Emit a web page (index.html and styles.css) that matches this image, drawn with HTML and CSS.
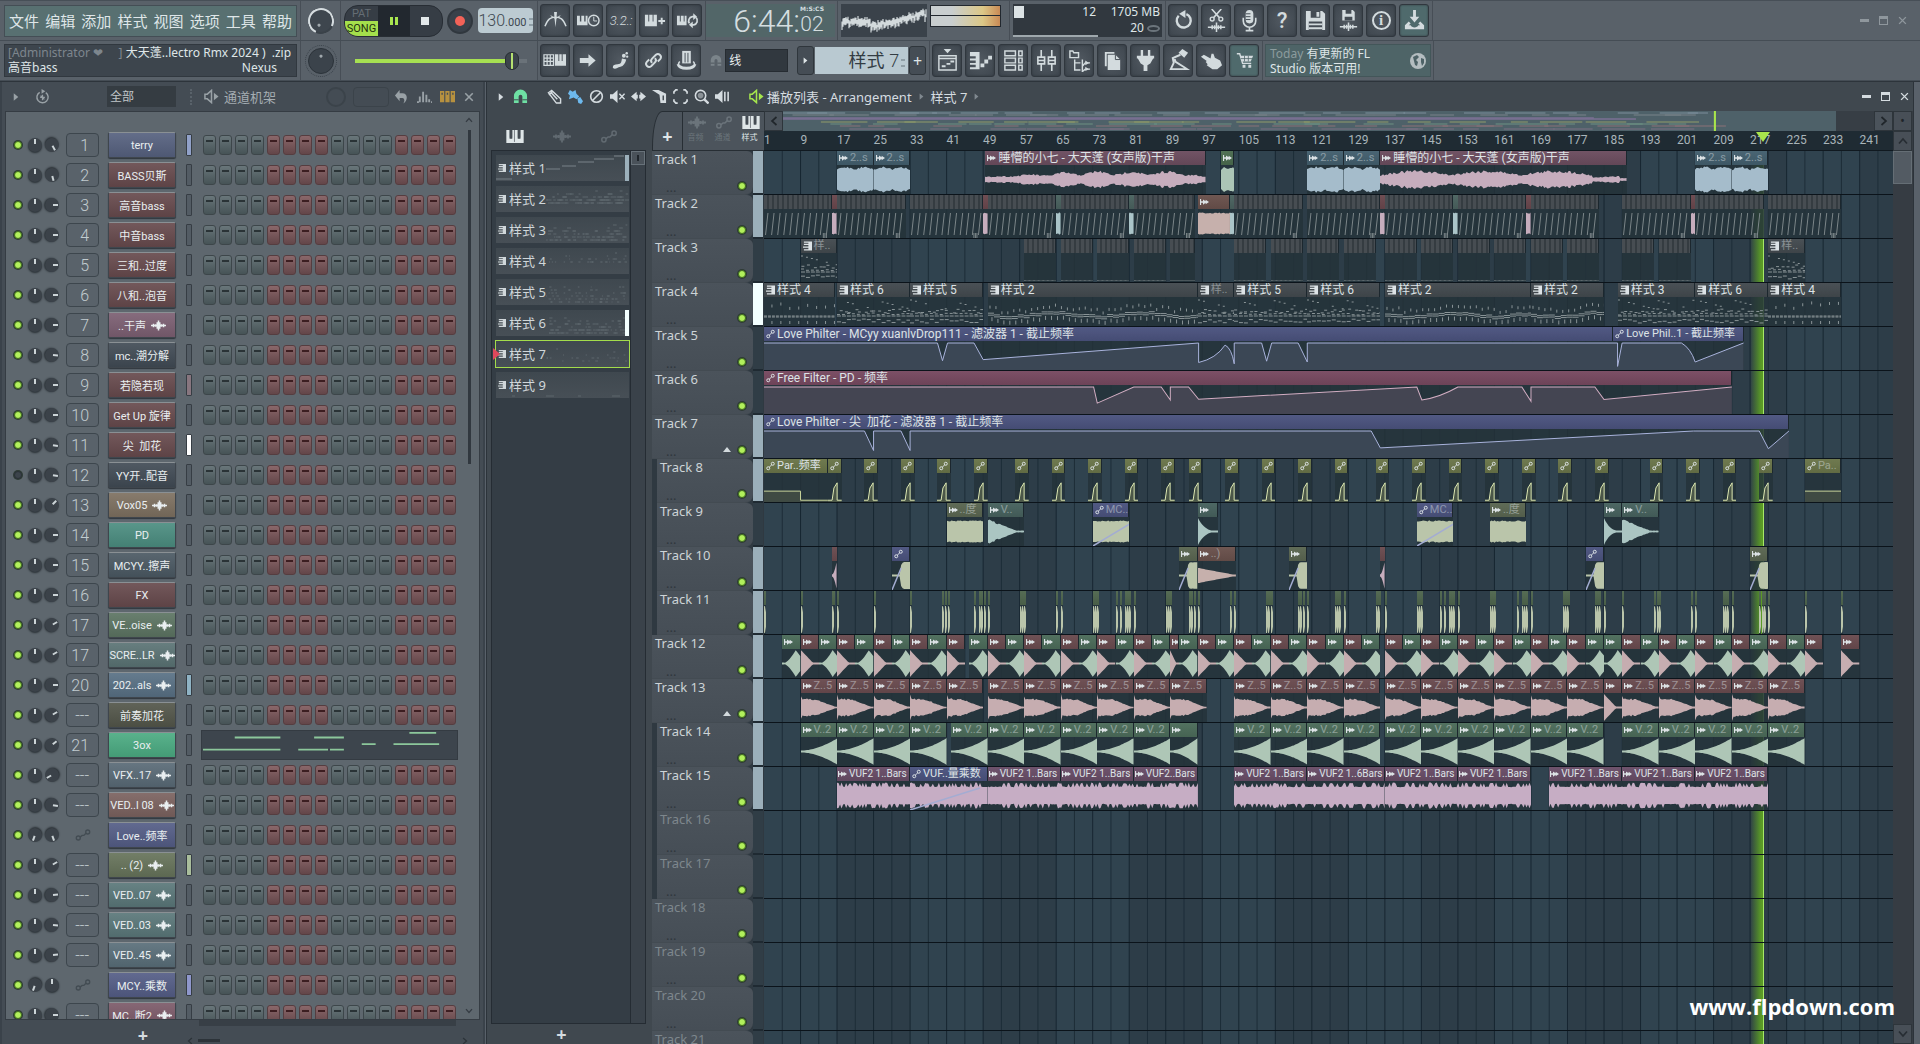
FILE: index.html
```html
<!DOCTYPE html>
<html lang="zh-CN">
<head>
  <meta charset="UTF-8" />
  <meta name="viewport" content="width=device-width, initial-scale=1.0" />
  <title>FL Studio</title>
  <link rel="stylesheet" href="styles.css">
</head>
<body>
  <svg class="sprite" aria-hidden="true">
    <symbol id="i-piano" viewBox="0 0 16 12"><path d="M0 0h3v8h2.500V0h5v8H13V0h3v12H0z" fill="currentColor"/><path d="M3.500 0h1.500v7h-1.500zM7.500 0v11M11 0h1.500v7H11z" fill="#444c54" stroke="#444c54" stroke-width=".6"/></symbol>
    <symbol id="i-wave" viewBox="0 0 18 12"><path d="M0 6h18M3 4v4M5.500 4.500v3M7.500 2v8M9 0v12M10.500 2v8M12.500 4.500v3M15 4v4" stroke="currentColor" stroke-width="1.800"/></symbol>
    <symbol id="i-auto" viewBox="0 0 18 14"><g fill="none" stroke="currentColor" stroke-width="1.600"><circle cx="3.500" cy="10.500" r="2.300"/><circle cx="14.500" cy="3.500" r="2.300"/><path d="M5.500 9.500 8 7.500h2L12.500 5"/></g></symbol>
    <symbol id="i-link2" viewBox="0 0 12 12"><g fill="none" stroke="currentColor" stroke-width="1.300"><circle cx="3" cy="9" r="2"/><circle cx="9" cy="3" r="2"/><path d="M4.500 7.500l3-3"/></g></symbol>
    <symbol id="i-clip" viewBox="0 0 12 10"><path d="M0 1v8h1.500V6H4v2.500L7.500 6v2L12 5 7.500 2v2L4 1.500V4H1.500V1z" fill="currentColor"/></symbol>
    <symbol id="i-pat" viewBox="0 0 10 10"><path d="M1 0h9v10H1V8.500h5V7H0V5.500h6V4H1V2.500h5V1.500H1z" fill="currentColor"/></symbol>
    <symbol id="i-metro" viewBox="0 0 24 24"><path d="M1 18C4 10 7 8.500 12 8.500S20 10 23 18" fill="none" stroke="currentColor" stroke-width="1.500"/><path d="M10.500 3h3l-.5 7L12 19l-1-9z" fill="currentColor"/><path d="M7 7l5 3 5-3" stroke="currentColor" fill="none"/></symbol>
    <symbol id="i-wait" viewBox="0 0 24 24"><path d="M0 7h3v6h1.500V7h3v6H9V7h2v10H0z" fill="currentColor"/><circle cx="17.500" cy="12" r="5.500" fill="none" stroke="currentColor" stroke-width="1.500"/><path d="M17.500 8v4.500H21" fill="none" stroke="currentColor"/></symbol>
    <symbol id="i-pianoplus" viewBox="0 0 24 24"><path d="M2 6h3.500v7h1V6H10v7h1V6h3.500v12H2z" fill="currentColor"/><path d="M19.500 9v7M16 12.500h7" stroke="currentColor" stroke-width="2"/></symbol>
    <symbol id="i-pianoloop" viewBox="0 0 24 24"><path d="M1 7h3v6h1V7h3v6h1V7h2v10H1z" fill="currentColor"/><path d="M14 15a4.500 4.500 0 0 1 3-7h2M21 9a4.500 4.500 0 0 1-2.500 7.500H16" fill="none" stroke="currentColor" stroke-width="1.800"/><path d="M18 4.500v7l4-3.500zM17.500 13v7l-4-3.500z" fill="currentColor"/></symbol>
    <symbol id="i-kbd" viewBox="0 0 24 24"><path d="M1 6h10v11H1zM1 9.500h10M1 13h10M4.300 6v11M7.600 6v11" fill="none" stroke="currentColor" stroke-width="1.300"/><path d="M12.500 5.500H16v7h1v-7h2.500v7h1v-7H24v12H12.500z" fill="currentColor"/></symbol>
    <symbol id="i-arrow" viewBox="0 0 24 24"><path d="M4 9.500h9V5.500L20.500 12 13 18.500v-4H4z" fill="currentColor"/></symbol>
    <symbol id="i-foot" viewBox="0 0 24 24"><path d="M4 19c0-2 2-3 5-3 4 0 4-3 4.500-6l4.500 1c-1 4-3 7-6 7.500-3 .5-4 2-6 2-1 0-2-.5-2-1.500z" fill="currentColor"/><circle cx="15.500" cy="7" r="2" fill="currentColor"/><circle cx="18.500" cy="4.500" r="1.300" fill="currentColor"/><circle cx="19" cy="8" r="1.200" fill="currentColor"/></symbol>
    <symbol id="i-link" viewBox="0 0 24 24"><g fill="none" stroke="currentColor" stroke-width="2"><path d="M10.500 14.500a3.200 3.200 0 0 1 0-4.500l4-4a3.200 3.200 0 0 1 4.500 4.500l-2.500 2.500"/><path d="M13.500 9.500a3.200 3.200 0 0 1 0 4.500l-4 4A3.200 3.200 0 0 1 5 13.500L7.500 11"/></g></symbol>
    <symbol id="i-hat" viewBox="0 0 24 24"><path d="M7.500 2h9v13h-9z" fill="currentColor"/><path d="M10.500 4v10M13.500 4v10" stroke="#444c54"/><path d="M5 13c-4 4 2 6.500 7 6.500s11-2.500 7-6.500M2.500 16c2 6.500 17 6.500 19 0" fill="none" stroke="currentColor" stroke-width="1.700"/></symbol>
    <symbol id="i-magnet" viewBox="0 0 16 16"><path d="M1 15V7.500a7 7 0 0 1 14 0V15h-5V8a2 2 0 0 0-4 0v7z" fill="currentColor"/><path d="M1 11.500h5M10 11.500h5" stroke="#40484f"/></symbol>
    <symbol id="i-undo" viewBox="0 0 24 24"><path d="M7 7a7.300 7.300 0 1 0 8-1.700" fill="none" stroke="currentColor" stroke-width="2.500"/><path d="M14 1v8.500L7.500 5z" fill="currentColor"/></symbol>
    <symbol id="i-cut" viewBox="0 0 24 24"><path d="M7 0l8 9M17 0 9 9M3 19h18M7.500 17v4M10 17v4M12 14v10M14 17v4M16.500 17v4" stroke="currentColor" stroke-width="1.600"/><circle cx="7.500" cy="10.500" r="2" fill="none" stroke="currentColor" stroke-width="1.500"/><circle cx="16.500" cy="10.500" r="2" fill="none" stroke="currentColor" stroke-width="1.500"/></symbol>
    <symbol id="i-mic" viewBox="0 0 24 24"><rect x="8" y="1" width="8" height="14" rx="4" fill="currentColor"/><path d="M8 5h5M8 8h5M8 11h5" stroke="#444c54"/><path d="M5.500 9v3.500a6.500 6.500 0 0 0 13 0V9M12 19v3M8 22.500h8" fill="none" stroke="currentColor" stroke-width="1.700"/></symbol>
    <symbol id="i-save" viewBox="0 0 24 24"><path d="M2 2h17l3 3v17H2z" fill="currentColor"/><path d="M7 2h10v7H7zM5 13h14v9H5z" fill="#444c54"/><path d="M13 3h3v5h-3zM5 15h14v2H5zM5 19h14v2H5z" fill="currentColor"/></symbol>
    <symbol id="i-savewave" viewBox="0 0 24 24"><path d="M5.500 1h11l2 2v9h-13z" fill="currentColor"/><path d="M9 1h6v4H9zM8 8h8v4H8z" fill="#444c54"/><path d="M3 18.500h18M7.500 16.500v4M10 16.500v4M12 14v9M14 16.500v4M16.500 16.500v4" stroke="currentColor" stroke-width="1.600"/></symbol>
    <symbol id="i-down" viewBox="0 0 24 24"><path d="M10.500 1h3v7H17l-5 6-5-6h3.500z" fill="currentColor"/><path d="M6 13l-4 4v4h20v-4l-4-4-2 2 2 2h-2c-1 3-7 3-8 0H6l2-2z" fill="currentColor"/></symbol>
    <symbol id="i-playlist" viewBox="0 0 24 24"><path d="M8 0h8l-4 4.500z" fill="currentColor"/><path d="M3 7h18v15H3zM3 10h18" fill="none" stroke="currentColor" stroke-width="1.500"/><path d="M6 18h4M11 15.500h4M15 13h4" stroke="currentColor" stroke-width="2"/></symbol>
    <symbol id="i-roll" viewBox="0 0 24 24"><path d="M1 3h10v18H1v-2h6v-2.500H1v-2h6V12H1v-2h6V7.500H1z" fill="currentColor"/><path d="M12 15h4v4h-4zM16 11h4v4h-4zM20 7h4v4h-4z" fill="currentColor"/></symbol>
    <symbol id="i-rack" viewBox="0 0 24 24"><path d="M3 2h11v5H3zM3 9.500h11v5H3zM3 17h11v5H3zM17.500 2H21v5h-3.500zM17.500 9.500H21v5h-3.500zM17.500 17H21v5h-3.500z" fill="none" stroke="currentColor" stroke-width="1.500"/></symbol>
    <symbol id="i-mixer" viewBox="0 0 24 24"><path d="M6.500 1v7M6.500 16v7M17.500 1v7M17.500 16v7M3 8.500h7v7H3zM14 8.500h7v7h-7zM3 12h7M14 12h7" fill="none" stroke="currentColor" stroke-width="1.700"/></symbol>
    <symbol id="i-tree" viewBox="0 0 24 24"><path d="M2 2h3l1 2h5v5H2zM7 11v11h6M7 14.500h6M15 11v7l3-3.500h5M15 18.500v5l3-2.500h5" fill="none" stroke="currentColor" stroke-width="1.500"/><path d="M18 12l4 2.500-4 2.500zM18 18.500l4 2.500-4 2z" fill="currentColor"/></symbol>
    <symbol id="i-pages" viewBox="0 0 24 24"><path d="M4 3h10v2H6v13H4z" fill="currentColor"/><path d="M7 6h8l5 5v11H7z" fill="currentColor"/><path d="M15 6v5h5" fill="none" stroke="#444c54"/></symbol>
    <symbol id="i-plug" viewBox="0 0 24 24"><path d="M7 1h2.500v6h5V1H17v6h4v3h-1l-3 5-3 2v6h-4v-6l-3-2-3-5H3V7h4z" fill="currentColor"/></symbol>
    <symbol id="i-lamp" viewBox="0 0 24 24"><path d="M14 6 6 9.500l1 5L4 21h17l-3-2-9-5.500-1-3" fill="none" stroke="currentColor" stroke-width="2"/><path d="M12 4l4-4 6 4-4 5z" fill="currentColor"/></symbol>
    <symbol id="i-hand" viewBox="0 0 24 24"><path d="M1 8l3-2 7 4 1-5h2l1.500 4L21 12l2 5-5 4h-5l-6-4 1-1-2-2.500 1-1z" fill="currentColor"/></symbol>
    <symbol id="i-cart" viewBox="0 0 24 24"><path d="M4 5h3l3 10h9" fill="none" stroke="currentColor" stroke-width="1.500"/><path d="M7.500 7H21l-2.500 6H9.500zM10 16.500h3v3h-3zM16 16.500h3v3h-3z" fill="currentColor"/><path d="M8 10h12M12 7v6M16 7v6" stroke="#4d6266" stroke-width=".8"/></symbol>
    <symbol id="i-pencil" viewBox="0 0 16 16"><path d="M1.500 4 5 1.500l9.500 9V15H10zM4.500 4l6.500 7M2 6.500 5.500 3" fill="none" stroke="currentColor" stroke-width="1.500"/></symbol>
    <symbol id="i-brush" viewBox="0 0 16 16"><path d="M2 1l3 2 3-2 1 4 3 3-3 3-3-2-5 2 1-4-2-2z M10 10l3-1.500 3 4.500-2 3-3-1z" fill="currentColor"/></symbol>
    <symbol id="i-no" viewBox="0 0 16 16"><circle cx="8" cy="8" r="6.200" fill="none" stroke="currentColor" stroke-width="1.700"/><path d="M4 12l8-8" stroke="currentColor" stroke-width="1.700"/></symbol>
    <symbol id="i-mute" viewBox="0 0 16 16"><path d="M0 5.500h3L8 1v14l-5-4.500H0z" fill="currentColor"/><path d="M10 5l5.500 6M15.500 5 10 11" stroke="currentColor" stroke-width="1.500"/></symbol>
    <symbol id="i-slip" viewBox="0 0 16 16"><path d="M0 8l6-5v3h4V3l6 5-6 5v-3H6v3z" fill="currentColor"/><path d="M8 4v8" stroke="#40484f" stroke-width="1.500"/></symbol>
    <symbol id="i-slice" viewBox="0 0 16 16"><path d="M0 1h7l8 4v10h-6L8 6z" fill="currentColor"/><path d="M12 7v5" stroke="#40484f" stroke-width="1.500"/></symbol>
    <symbol id="i-sel" viewBox="0 0 16 16"><path d="M1 5V3l2-2h2M11 1h2l2 2v2M15 11v2l-2 2h-2M5 15H3l-2-2v-2" fill="none" stroke="currentColor" stroke-width="1.800"/></symbol>
    <symbol id="i-zoom" viewBox="0 0 16 16"><circle cx="7" cy="7" r="5.500" fill="none" stroke="currentColor" stroke-width="1.700"/><circle cx="7" cy="7" r="3" fill="currentColor" opacity=".5"/><path d="M11 11l4.500 4.500" stroke="currentColor" stroke-width="2.500"/></symbol>
    <symbol id="i-spk" viewBox="0 0 16 16"><path d="M0 5.500h3L8 1v14l-5-4.500H0z" fill="currentColor"/><path d="M10.500 3v10M14 3v10" stroke="currentColor" stroke-width="1.700"/></symbol>
    <symbol id="i-play" viewBox="0 0 16 16"><path d="M1 5.500h2.500L8 1.500v13L3.500 10.500H1z" fill="none" stroke="currentColor" stroke-width="1.600"/><path d="M10.500 4v8l5-4z" fill="currentColor"/></symbol>
    <symbol id="i-tri" viewBox="0 0 8 12"><path d="M1 1v10l6-5z" fill="currentColor"/></symbol>
    <symbol id="i-gear" viewBox="0 0 16 16"><path d="M5 3.500a6 6 0 1 0 6.500.3" fill="none" stroke="currentColor" stroke-width="1.500"/><path d="M8 6v6M5.500 9h5M6 7l4 4" stroke="currentColor" stroke-width="1.300"/><path d="M7 0v5l4-2.500z" fill="currentColor"/></symbol>
    <symbol id="i-back" viewBox="0 0 16 16"><path d="M6 1v3.500h3c6 0 6 8 1 11 2-4 1-6-2-6H6V13L1 7z" fill="currentColor"/></symbol>
    <symbol id="i-bars" viewBox="0 0 16 16"><path d="M0 14h2M3 14V8M6.500 14V3M10 14V6M13 14v-3M15 14h1" stroke="currentColor" stroke-width="2"/></symbol>
    <symbol id="i-cols" viewBox="0 0 16 12"><path d="M0 0h4.500v12H0zM5.700 0h4.500v12H5.700zM11.400 0H16v12h-4.600z" fill="currentColor"/><path d="M1.500 3h1.500M7.200 3h1.500M13 3h1.500" stroke="#454d54" stroke-width="2"/></symbol>
    <symbol id="i-x" viewBox="0 0 16 16"><path d="M2 2l12 12M14 2 2 14" stroke="currentColor" stroke-width="2.500"/></symbol>
    <symbol id="i-globe" viewBox="0 0 16 16"><circle cx="8" cy="8" r="8" fill="currentColor"/><path d="M3 4l4-2 2 2-3 3 2 2-1 4-2-1-1-4zM11 5l3 1v4l-2 3-1-4z" fill="#4d6266"/></symbol>
    <symbol id="i-chev" viewBox="0 0 10 8"><path d="M1 6.500 5 2l4 4.500" fill="none" stroke="currentColor" stroke-width="1.700"/></symbol>
  </svg>

  <div class="app">
    <header class="toolbar">
      <div class="bar">
        <div class="group menu-group">
          <nav class="menu">
            <button>文件</button><button>编辑</button><button>添加</button><button>样式</button><button>视图</button><button>选项</button><button>工具</button><button>帮助</button>
          </nav>
        </div>
        <div class="group knob-group"><button class="main-knob lit" aria-label="Main volume"></button></div>
        <div class="group transport">
          <div class="pill">
            <button class="mode"><span class="pat">PAT</span><span class="song">SONG</span></button>
            <button class="pause" aria-label="Pause"><i></i><i></i></button>
            <button class="stop" aria-label="Stop"><i></i></button>
          </div>
          <button class="rec" aria-label="Record"><i></i></button>
          <button class="tempo">130<small>.000</small><em class="spin"></em></button>
        </div>
        <div class="group tools">
          <button class="tool" data-icon="metro" aria-label="Metronome"></button>
          <button class="tool" data-icon="wait" aria-label="Wait for input"></button>
          <button class="tool count">3.2.:</button>
          <button class="tool" data-icon="pianoplus" aria-label="Overdub"></button>
          <button class="tool" data-icon="pianoloop" aria-label="Loop record"></button>
        </div>
        <div class="group time"><div class="clock"><span>6:44:</span><span class="cs"><small>M:S:CS</small><span>02</span></span></div></div>
        <div class="group scope-group">
          <svg class="scope" id="scope" viewBox="0 0 86 33" preserveAspectRatio="none"></svg>
          <div class="meter"><i></i><i></i></div>
        </div>
        <div class="group perf-group">
          <div class="perf">
            <div class="cpu"><i></i><span>12</span></div>
            <div class="mem"><span>1705 MB</span><span>20 <em></em></span></div>
          </div>
        </div>
        <div class="group tools">
          <button class="tool" data-icon="undo" aria-label="Undo"></button>
          <button class="tool" data-icon="cut" aria-label="Edit sample"></button>
          <button class="tool" data-icon="mic" aria-label="Record audio"></button>
          <button class="tool glyph">?</button>
          <button class="tool" data-icon="save" aria-label="Save"></button>
          <button class="tool" data-icon="savewave" aria-label="Render"></button>
          <button class="tool"><b class="info">i</b></button>
          <button class="tool teal" data-icon="down" aria-label="Download"></button>
        </div>
        <div class="win-buttons"><button class="min" aria-label="Minimize"></button><button class="max" aria-label="Maximize"></button><button aria-label="Close" data-icon="x"></button></div>
      </div>

      <div class="bar">
        <div class="group menu-group">
          <div class="hint">
            <p><span class="dim">[Administrator ❤ &nbsp; &nbsp; ]</span> 大天蓬..lectro Rmx 2024 ) &nbsp;.zip</p>
            <p class="second"><span>高音bass</span><span>Nexus</span></p>
          </div>
        </div>
        <div class="group knob-group"><button class="main-knob" aria-label="Main pitch"></button></div>
        <div class="group shift"><input type="range" class="song-pos" value="95" aria-label="Song position"></div>
        <div class="group tools wide">
          <button class="tool" data-icon="kbd" aria-label="Typing keyboard"></button>
          <button class="tool" data-icon="arrow" aria-label="Step edit"></button>
          <button class="tool" data-icon="foot" aria-label="Scroll"></button>
          <button class="tool" data-icon="link" aria-label="Link"></button>
          <button class="tool" data-icon="hat" aria-label="Touch"></button>
          <span class="snap-icon" data-icon="magnet"></span>
          <select class="drop snap" aria-label="Snap"><option>线</option></select>
          <button class="step-btn" data-icon="tri" aria-label="Menu"></button>
          <button class="pattern-name">样式 <span>7</span><em class="spin"></em></button>
          <button class="step-btn">+</button>
        </div>
        <div class="group tools">
          <button class="tool" data-icon="playlist" aria-label="Playlist"></button>
          <button class="tool" data-icon="roll" aria-label="Piano roll"></button>
          <button class="tool" data-icon="rack" aria-label="Channel rack"></button>
          <button class="tool" data-icon="mixer" aria-label="Mixer"></button>
          <button class="tool" data-icon="tree" aria-label="Browser"></button>
          <button class="tool" data-icon="pages" aria-label="Copy"></button>
          <button class="tool" data-icon="plug" aria-label="Plugins"></button>
          <button class="tool" data-icon="lamp" aria-label="Tempo tapper"></button>
          <button class="tool" data-icon="hand" aria-label="Touch controller"></button>
          <button class="tool teal" data-icon="cart" aria-label="Shop"></button>
        </div>
        <div class="group news-group">
          <div class="news"><p><span>Today</span> 有更新的 FL<br>Studio 版本可用!</p><i data-icon="globe"></i></div>
        </div>
      </div>
    </header>

    <main class="desk">
      <section class="rack">
        <div class="title-bar">
          <i class="t-arrow" data-icon="tri"></i>
          <i class="t-gear" data-icon="gear"></i>
          <select class="drop filter" aria-label="Channel filter"><option>全部</option></select>
          <i class="dots"></i>
          <i class="t-spk" data-icon="play"></i>
          <h2>通道机架</h2>
          <i class="swing"></i>
          <i class="swing-box"></i>
          <button class="mini" data-icon="back" aria-label="Undo"></button>
          <button class="mini" data-icon="bars" aria-label="Graph editor"></button>
          <button class="mini gold" data-icon="cols" aria-label="Steps"></button>
          <button class="mini small" data-icon="x" aria-label="Close"></button>
        </div>
        <div class="rack-body">
          <div class="channels" id="channels"></div>
          <div class="rack-scroll"><i data-icon="chev"></i><b></b><i class="flip" data-icon="chev"></i></div>
        </div>
        <div class="rack-foot">
          <button class="add">+</button>
          <div class="h-scroll"><i data-icon="chev"></i><b></b><i data-icon="chev"></i></div>
        </div>
      </section>

      <section class="playlist">
        <div class="title-bar">
          <i class="t-arrow" data-icon="tri"></i>
          <button class="mini green" data-icon="magnet" aria-label="Snap"></button>
          <div class="pl-tools" id="plTools"></div>
          <i class="t-spk lime" data-icon="play"></i>
          <h2>播放列表 - Arrangement <i data-icon="tri"></i> 样式 7 <i data-icon="tri"></i></h2>
          <div class="win-buttons"><button class="min" aria-label="Minimize"></button><button class="max" aria-label="Maximize"></button><button aria-label="Close" data-icon="x"></button></div>
        </div>
        <div class="pl-body">
          <aside class="picker">
            <div class="picker-tabs"><i data-icon="piano"></i><i class="off" data-icon="wave"></i><i class="off" data-icon="auto"></i></div>
            <div class="picker-box">
              <div class="patterns" id="patterns"></div>
              <div class="picker-scroll"><b></b></div>
            </div>
            <button class="add">+</button>
          </aside>
          <div class="arrange">
            <div class="arrange-head">
              <div class="corner">
                <button class="corner-add">+</button>
                <div class="corner-tabs">
                  <span class="off"><i data-icon="wave"></i>音频</span>
                  <span class="off"><i data-icon="auto"></i>通道</span>
                  <span><i data-icon="piano"></i>样式</span>
                </div>
              </div>
              <div class="head-right">
                <div class="overview">
                  <button class="ov-btn left" data-icon="chev" aria-label="Scroll left"></button>
                  <svg class="mini-map" id="miniMap" viewBox="0 0 1000 20" preserveAspectRatio="none"></svg>
                  <button class="ov-btn right" data-icon="chev" aria-label="Scroll right"></button>
                </div>
                <div class="ruler" id="ruler"></div>
              </div>
            </div>
            <div class="tracks" id="tracks">
              <svg class="grid-lines" id="gridLines" preserveAspectRatio="none"></svg>
            </div>
          </div>
          <div class="v-scroll"><button class="dot" aria-label="Zoom">•</button><button data-icon="chev" aria-label="Up"></button><b></b><button class="flip last" data-icon="chev" aria-label="Down"></button></div>
        </div>
        <div class="watermark">www.flpdown.com</div>
      </section>
    </main>
  </div>
  <script src="script.js"></script>
</body>
</html>
```
FILE: styles.css
```css
* {
  box-sizing: border-box;
}
body {
  margin: 0;
  background: #59616a;
  color: #dfe6e8;
  font-family: "Noto Sans", "Noto Sans CJK SC", sans-serif;
  font-size: 12px;
  overflow: hidden;
}
button,
input,
select {
  font: inherit;
  color: inherit;
  border: 0;
  padding: 0;
  margin: 0;
  background: none;
}
h2,
p {
  margin: 0;
  font-weight: normal;
  white-space: nowrap;
}
i,
em {
  font-style: normal;
}
svg {
  display: block;
}
.sprite {
  position: absolute;
  width: 0;
  height: 0;
}
.app {
  display: flex;
  flex-direction: column;
  height: 100vh;
}

/* toolbar */
.toolbar {
  flex: none;
  background: #596169;
  border-top: 1px solid #474f57;
  border-bottom: 1px solid #2d343b;
}
.bar {
  display: flex;
  height: 40px;
  border-bottom: 1px solid #454d55;
}
.group {
  display: flex;
  align-items: center;
  border-right: 1px solid #474e56;
}
.menu-group {
  width: 301px;
  padding: 0 3px 0 4px;
}
.menu {
  display: flex;
  flex: 1;
  justify-content: space-between;
  align-items: center;
  height: 32px;
  padding: 0 4px;
  background: #587071;
  border: 1px solid #444e55;
  font-size: 15px;
}
.hint {
  flex: 1;
  height: 33px;
  padding: 0 3px;
  background: #3d454d;
  border: 1px solid #31383f;
  line-height: 15px;
}
.hint .dim {
  color: #7d868d;
}
.second {
  display: flex;
  justify-content: space-between;
  padding-right: 16px;
}
.knob-group {
  width: 40px;
  justify-content: center;
}
.main-knob {
  width: 26px;
  height: 26px;
  border-radius: 50%;
  border: 1px solid #2b3239;
  background: radial-gradient(circle at 50% 30%, #a0a8ad 0 1px, transparent 2px), #3b434b;
  outline: 1px dotted #3b434b;
  outline-offset: 2px;
}
.main-knob.lit {
  background: radial-gradient(circle at 65% 65%, #a0a8ad 0 1px, transparent 2px), #3e464e;
  border: 2px solid #d5dcdf;
  border-right-color: #3a4249;
  outline: none;
  transform: rotate(70deg);
}
.transport {
  width: 197px;
  padding-left: 3px;
  gap: 4px;
}
.pill {
  display: flex;
  width: 99px;
  height: 32px;
  border-radius: 14px;
  overflow: hidden;
  background: #363d45;
  border: 1px solid #272d34;
}
.mode {
  display: flex;
  flex-direction: column;
  width: 33px;
  font: 11px/15px Roboto, sans-serif;
}
.pat {
  color: #656d74;
  width: 100%;
}
.song {
  width: 100%;
  background: #a4e04c;
  color: #23310f;
}
.pause {
  display: flex;
  justify-content: center;
  align-items: center;
  gap: 2px;
  width: 32px;
  background: #22282f;
}
.pause i {
  width: 3px;
  height: 8px;
  background: #a9e650;
}
.stop {
  flex: 1;
}
.stop i {
  display: block;
  width: 8px;
  height: 8px;
  margin-left: 11px;
  background: #e2e8ea;
}
.rec {
  width: 26px;
  height: 26px;
  border-radius: 50%;
  background: #39414a;
  border: 2px solid #30373e;
}
.rec i {
  display: block;
  width: 10px;
  height: 10px;
  margin: 0 auto;
  border-radius: 50%;
  background: #f26258;
}
.tempo {
  width: 55px;
  height: 25px;
  margin-left: 1px;
  border-radius: 4px;
  background: #bccbd2;
  color: #3c474f;
  font: 300 16px/25px Roboto, sans-serif;
  white-space: nowrap;
}
.tempo small {
  font-size: 11px;
  font-weight: 400;
}
.tools {
  gap: 3px;
  padding: 0 3px 0 2px;
}
.tool {
  display: flex;
  align-items: center;
  justify-content: center;
  width: 30px;
  height: 33px;
  border-radius: 3px;
  border: 1px solid #30373e;
  background: radial-gradient(#515961, #3d454d);
  color: #d3dbde;
  box-shadow: inset 0 0 2px #2f363c;
}
.tool svg {
  width: 23px;
  height: 23px;
}
.tool.teal {
  background: #4f6a6c;
}
.count {
  font: italic 300 13px Roboto, sans-serif;
}
.glyph {
  font: 500 22px Roboto, sans-serif;
}
.info {
  width: 19px;
  height: 19px;
  border: 2px solid #d3dbde;
  border-radius: 50%;
  font: bold 15px/15px "Liberation Serif", serif;
}
.time {
  width: 132px;
}
.clock {
  display: flex;
  width: 129px;
  height: 33px;
  padding-right: 11px;
  justify-content: flex-end;
  background: #526668;
  font: 300 32px/34px Roboto, sans-serif;
  color: #d5dee0;
}
.cs {
  display: flex;
  flex-direction: column;
  align-items: center;
  width: 24px;
  font-size: 21px;
  line-height: 21px;
}
.cs small {
  font: bold 6px/10px "DejaVu Sans", sans-serif;
}
.scope-group {
  width: 172px;
  padding-left: 3px;
  gap: 3px;
}
.scope {
  width: 86px;
  height: 33px;
  background: #3a424a;
}
.meter {
  display: flex;
  flex-direction: column;
  gap: 1px;
  width: 71px;
  height: 22px;
  margin-bottom: 10px;
  background: #22282f;
  padding: 1px;
}
.meter i {
  flex: 1;
  background: linear-gradient(90deg, #c9cecf 30%, #dcc887 75%, #c98a55);
}
.perf-group {
  width: 156px;
  padding-left: 3px;
}
.perf {
  display: flex;
  width: 149px;
  height: 33px;
  background: #31383f;
  line-height: 16px;
}
.cpu {
  display: flex;
  justify-content: space-between;
  width: 85px;
  padding-right: 2px;
  border-bottom: 2px solid #9fa8ad;
}
.cpu i {
  width: 10px;
  height: 12px;
  margin: 2px 0 0 1px;
  background: #dbe2e4;
}
.mem {
  display: flex;
  flex-direction: column;
  flex: 1;
  align-items: flex-end;
  padding-right: 2px;
  white-space: nowrap;
}
.mem em {
  display: inline-block;
  width: 13px;
  height: 7px;
  border: 2px solid #6c757c;
  border-radius: 50%;
}
.win-buttons {
  display: flex;
  align-items: center;
  gap: 10px;
  margin-left: auto;
  padding-right: 13px;
}
.win-buttons button {
  width: 9px;
  height: 9px;
}
.win-buttons .min {
  height: 3px;
  background: currentColor;
}
.win-buttons .max {
  border: 1px solid;
  border-top-width: 3px;
}
.win-buttons button svg {
  width: 9px;
  height: 9px;
}
.toolbar .win-buttons {
  color: #8f979d;
}
.shift {
  width: 197px;
  padding-left: 14px;
}
.song-pos {
  appearance: none;
  width: 172px;
  height: 20px;
}
.song-pos::-webkit-slider-runnable-track {
  height: 4px;
  background: linear-gradient(90deg, #a6e052 90%, #6a7279 90%);
}
.song-pos::-webkit-slider-thumb {
  appearance: none;
  width: 14px;
  height: 18px;
  margin-top: -7px;
  border-radius: 7px 7px 8px 8px;
  border: 1px solid #262c32;
  background: linear-gradient(90deg, #3c444b 5px, #b5e070 5px 7px, #3c444b 7px);
}
.wide {
  width: 392px;
}
.snap-icon svg {
  width: 12px;
  height: 13px;
  margin-left: 6px;
  color: #7b848a;
}
.drop {
  appearance: none;
  background: #31383f;
  border: 1px solid #262c32;
  color: #e8edef;
  padding-left: 3px;
}
.drop option {
  background: #31383f;
}
.snap {
  width: 63px;
  height: 23px;
}
.step-btn {
  width: 17px;
  height: 29px;
  border-radius: 3px;
  border: 1px solid #2f363c;
  background: #454d55;
  font-size: 16px;
}
.step-btn svg {
  width: 5px;
  height: 9px;
  margin: 0 auto;
}
.step-btn[data-icon] {
  margin-left: 6px;
}
.pattern-name {
  width: 94px;
  height: 27px;
  margin: 0 -2px;
  padding-right: 3px;
  background: #b9c9d1;
  color: #333c43;
  font-size: 18px;
  line-height: 25px;
  text-align: right;
  white-space: nowrap;
}
.pattern-name span {
  font-family: Roboto, sans-serif;
  font-weight: 300;
}
.spin {
  display: inline-block;
  width: 4px;
  height: 8px;
  margin-left: 2px;
  border: solid #8f9ea6;
  border-width: 2px 0;
}
.news-group {
  padding: 0 2px;
  width: 171px;
}
.news {
  display: flex;
  align-items: center;
  justify-content: space-between;
  width: 166px;
  height: 33px;
  padding: 0 4px;
  background: #4e6467;
  border: 1px solid #435659;
  line-height: 15px;
}
.news span {
  color: #8c9c9e;
}
.news svg {
  width: 16px;
  height: 16px;
  color: #b4bdc0;
}

/* windows */
.desk {
  display: flex;
  flex: 1;
  min-height: 0;
}
.title-bar {
  display: flex;
  align-items: center;
  height: 29px;
  flex: none;
}
.title-bar h2 {
  font-size: 13px;
}
.title-bar svg {
  width: 15px;
  height: 15px;
}
.title-bar .t-arrow svg {
  width: 6px;
  height: 12px;
}

/* channel rack */
.rack {
  display: flex;
  flex-direction: column;
  width: 485px;
  flex: none;
  background: #444c54;
  border: solid #3a424a;
  border-width: 0 2px;
}
.rack .title-bar {
  padding: 0 5px 0 11px;
  color: #99a1a6;
}
.t-gear {
  margin-left: 16px;
}
.rack .filter {
  width: 69px;
  height: 21px;
  margin-left: 57px;
  background: #353c42;
  border: 0;
  color: #c0c6c9;
}
.dots {
  width: 2px;
  height: 16px;
  margin: 0 12px 0 14px;
  border-left: 2px dotted #59626a;
}
.rack h2 {
  margin-left: 5px;
  color: #a5adb2;
}
.swing {
  width: 20px;
  height: 20px;
  margin-left: auto;
  border: 2px solid #3b434a;
  border-radius: 50%;
}
.swing-box {
  width: 36px;
  height: 20px;
  margin: 0 1px 0 7px;
  border: 1px solid #3b434a;
  border-radius: 4px;
}
.mini {
  display: flex;
  justify-content: center;
  width: 23px;
}
.mini.gold {
  color: #b7913f;
}
.mini.small svg {
  width: 10px;
  height: 10px;
}
.mini.small {
  width: 19px;
}
.rack-body {
  display: flex;
  flex: 1;
  min-height: 0;
  margin: 0 3px 0 3px;
  overflow: hidden;
  background: #5e676e;
  border: 1px solid #353c43;
}
.channels {
  flex: 1;
  padding-top: 18px;
}
.channel {
  display: flex;
  align-items: center;
  height: 30px;
  padding-left: 8px;
}
.led {
  width: 8px;
  height: 8px;
  flex: none;
  border-radius: 50%;
  background: #b2f05c;
  border: 1px solid #3e6b1c;
  box-shadow: 0 0 0 1px #2e3b35;
}
.led.off {
  background: #3c444b;
  border-color: #2a3137;
}
.knob {
  width: 14px;
  height: 14px;
  flex: none;
  border-radius: 50%;
  background: #3b4249;
  box-shadow: 0 1px 2px #262c31;
}
.knob::after {
  content: "";
  display: block;
  width: 2px;
  height: 5px;
  margin: 1px 6px;
  background: #ccd4d7;
}
.led + .knob {
  margin-left: 6px;
}
.knob + .knob {
  margin-left: 3px;
  transform: rotate(var(--turn));
}
.knob.low {
  transform: rotate(200deg);
}
.mix {
  display: block;
  width: 33px;
  height: 24px;
  flex: none;
  margin: 0 9px 0 7px;
  padding-right: 9px;
  border: 1px solid #3d464d;
  border-radius: 4px;
  background: #59626a;
  color: #c2ccd0;
  text-align: right;
  font: 300 16px Roboto, sans-serif;
}
.mix.auto {
  border: 0;
  background: none;
  padding: 6px 9px;
  color: #434c53;
}
.mix.auto svg {
  width: 16px;
  height: 12px;
}
.name {
  display: flex;
  align-items: center;
  justify-content: center;
  gap: 5px;
  width: 68px;
  height: 26px;
  flex: none;
  margin-right: 10px;
  border-radius: 2px;
  border: 1px solid #3f464d;
  border-top-color: #8a9094;
  background: linear-gradient(#ffffff14, #00000018), var(--tone);
  box-shadow: 0 1px 1px #30373d;
  color: #e9eef0;
  font: 11px Roboto, "Noto Sans CJK SC", sans-serif;
  white-space: pre;
}
.name svg {
  width: 15px;
  height: 11px;
}
.pick {
  width: 6px;
  height: 22px;
  flex: none;
  margin-right: 11px;
  border: 1px solid #363d44;
  border-radius: 1px;
  background: var(--lit, #535c64);
}
.steps {
  display: flex;
  gap: 3px;
}
.steps input {
  appearance: none;
  width: 13px;
  height: 20px;
  border: 1px solid #3d464a;
  border-radius: 3px;
  background: linear-gradient(#2a3336, #2a3336) 50% 4px / 7px 2px no-repeat, linear-gradient(#66727500, #465356), #69767a;
}
.steps input.red {
  border-color: #553d40;
  background: linear-gradient(#3c1e21, #3c1e21) 50% 4px / 7px 2px no-repeat, linear-gradient(#81606200, #634649), #8a676a;
}
.roll {
  width: 257px;
  height: 30px;
  margin-left: -2px;
  background: #3d454d;
  border: 1px solid #343b42;
}
.rack-scroll {
  display: flex;
  flex-direction: column;
  align-items: center;
  width: 20px;
  padding: 5px 0;
  color: #353c43;
}
.rack-scroll svg {
  width: 8px;
  height: 6px;
}
.rack-scroll b {
  width: 3px;
  height: 334px;
  margin: 7px 0 auto;
  background: #31383f;
}
.flip svg {
  transform: rotate(180deg);
}
.rack-foot {
  display: flex;
  height: 24px;
  flex: none;
}
.add {
  font-size: 18px;
  line-height: 18px;
  font-weight: bold;
  color: #d5dce0;
}
.rack-foot .add {
  width: 24px;
  margin-left: 129px;
  padding-top: 6px;
}
.h-scroll {
  display: flex;
  align-items: flex-end;
  width: 283px;
  margin-left: 31px;
  color: #2c3339;
  background: linear-gradient(#383f46, #383f46) 13px 0 / 257px 6px no-repeat;
}
.h-scroll b {
  width: 22px;
  height: 3px;
  margin: 0 auto 2px 4px;
  background: #2c3339;
}
.h-scroll svg {
  width: 8px;
  height: 6px;
  transform: rotate(-90deg);
}
.h-scroll b + i svg {
  transform: rotate(90deg);
}

/* playlist */
.playlist {
  display: flex;
  flex-direction: column;
  flex: 1;
  min-width: 0;
  margin: 0 6px 0 1px;
  position: relative;
  background: #40484f;
  border: solid #2c333a;
  border-width: 0 1px;
}
.playlist .title-bar {
  padding-left: 11px;
  color: #d5dce0;
}
.playlist .t-arrow {
  margin-right: 5px;
}
.green {
  color: #6ee0a4;
}
.pl-tools {
  display: flex;
  gap: 6px;
  margin: 0 22px 0 15px;
}
.pl-tools button:nth-child(2) {
  color: #6db9ee;
}
.lime {
  color: #a5e64d;
}
.playlist h2 {
  display: flex;
  align-items: center;
  gap: 7px;
  margin-left: 3px;
}
.playlist .t-spk {
  margin-left: -3px;
}
.playlist h2 svg {
  width: 5px;
  height: 9px;
  color: #808990;
}
.playlist .win-buttons {
  padding-right: 4px;
}
.pl-body {
  display: flex;
  flex: 1;
  min-height: 0;
}
.picker {
  display: flex;
  flex-direction: column;
  width: 155px;
  flex: none;
  margin: 0 6px 0 4px;
}
.picker-tabs {
  display: flex;
  justify-content: space-between;
  align-items: center;
  height: 39px;
  padding: 12px 28px 0 15px;
}
.picker-tabs svg {
  width: 18px;
  height: 13px;
}
.off {
  color: #616a71;
}
.picker-box {
  display: flex;
  flex: 1;
  background: #343d45;
  border: 1px solid #252c33;
}
.patterns {
  flex: 1;
  padding: 4px 1px 0 4px;
}
.pattern {
  position: relative;
  display: flex;
  align-items: center;
  gap: 3px;
  width: 100%;
  height: 26px;
  margin-bottom: 5px;
  padding-left: 2px;
  background: linear-gradient(#3f484f, #474f56);
  font-size: 13px;
  line-height: 20px;
  color: #d0d7da;
}
.pattern .pic {
  position: absolute;
  inset: 0;
  width: 100%;
  height: 100%;
}
.pattern > svg {
  width: 8px;
  height: 10px;
}
.pattern.current {
  outline: 1px solid #a3dc4b;
}
.pattern.current::before {
  content: "";
  position: absolute;
  left: -3px;
  border: 6px solid transparent;
  border-left: 7px solid #e0485c;
  z-index: 1;
}
.pattern .edge {
  position: absolute;
  right: 0;
  width: 4px;
  height: 26px;
  background: var(--edge);
}
.picker-scroll {
  width: 15px;
  background: #3a424a;
  border-left: 1px solid #252c33;
}
.picker-scroll b {
  display: block;
  width: 14px;
  height: 14px;
  border: 1px solid #68727a;
  background: linear-gradient(#20262c, #20262c) center / 2px 6px no-repeat, #4a525a;
}
.picker .add {
  height: 20px;
  padding-right: 14px;
}
.arrange {
  flex: 1;
  display: flex;
  flex-direction: column;
  min-width: 0;
}
.arrange-head {
  display: flex;
  height: 40px;
  flex: none;
}
.corner {
  display: flex;
  width: 112px;
  flex: none;
  border-bottom: 1px solid #272e34;
}
.corner-add {
  width: 31px;
  padding-top: 10px;
  background: #4c545c;
  border: 1px solid #272e34;
  border-bottom: 0;
  border-top-left-radius: 10px 36px;
  font-size: 18px;
  font-weight: bold;
}
.corner-tabs {
  display: flex;
  flex: 1;
  justify-content: space-around;
  background: #4c545c;
  border-top: 1px solid #272e34;
  font-size: 8px;
}
.corner-tabs svg {
  width: 18px;
  height: 13px;
  margin: 4px 0 2px;
}
.corner-tabs .off {
  color: #6b747b;
}
.head-right {
  flex: 1;
  background: #202c34;
}
.overview {
  display: flex;
  height: 20px;
  background: #373e45;
}
.ov-btn {
  width: 19px;
  background: #4b535b;
  border: 1px solid #2e353b;
}
.ov-btn svg {
  width: 10px;
  height: 8px;
  margin: 0 auto;
  color: #20262b;
  transform: rotate(-90deg);
}
.ov-btn.right svg {
  transform: rotate(90deg);
}
.mini-map {
  flex: 1;
  min-width: 0;
  height: 20px;
  margin-right: 38px;
  background: #4e6169;
}
.ruler {
  position: relative;
  display: flex;
  height: 20px;
  overflow: hidden;
  background: #1f2b33;
  border-bottom: 1px solid #101920;
  font: 12px/19px Roboto, sans-serif;
  color: #a9b5ba;
}
.ruler span {
  flex: none;
}
.marker {
  position: absolute;
  top: 1px;
  margin-left: -7px;
  border: 7px solid transparent;
  border-top: 10px solid #a8e44c;
}
.tracks {
  position: relative;
  flex: 1;
  overflow: hidden;
  background: #2f3941;
}
.grid-lines {
  position: absolute;
  top: 0;
  left: 112px;
  width: calc(100% - 112px);
  height: 100%;
}
.track {
  display: flex;
  height: 44px;
}
.track-head {
  position: relative;
  display: flex;
  justify-content: space-between;
  width: 101px;
  flex: none;
  padding: 0 7px 0 3px;
  border-radius: 0 6px 8px 0;
  border-bottom: 1px solid #434b52;
  background: linear-gradient(#4b535b, #464e56);
  font-size: 13px;
  line-height: 17px;
  color: #cdd4d7;
}
.track-head::after {
  content: "...";
  position: absolute;
  left: 14px;
  bottom: -2px;
  color: #30373d;
}
.track.sub .track-head {
  margin-left: 5px;
  width: 96px;
}
.track.sub .track-head::after {
  left: 9px;
}
.track.empty .track-head {
  color: #7e878d;
}
.track-head .led {
  margin-top: 31px;
}
.fold {
  margin: 32px 7px 0 auto;
  width: 0;
  height: 0;
  border: 4px solid transparent;
  border-top: 0;
  border-bottom: 5px solid #d3dadd;
}
.strip {
  width: 10px;
  flex: none;
  margin-right: 1px;
  border-bottom: 2px solid #1f2a32;
  background: var(--strip, #303d46);
}
.lane {
  position: relative;
  flex: 1;
  border-bottom: 1px solid #0b131a;
}
.clip {
  position: absolute;
  top: 0;
  bottom: 0;
  overflow: hidden;
  background: #25323ad9;
}
.clip-head {
  display: flex;
  align-items: center;
  gap: 2px;
  height: 14px;
  padding-left: 2px;
  overflow: hidden;
  background: linear-gradient(#ffffff08, #00000018), var(--c);
  border-right: 1px solid #1c272e;
  font: 11px/14px Roboto, "Noto Sans CJK SC", sans-serif;
  white-space: pre;
  color: #dde3e6;
}
.clip.long .clip-head {
  font-size: 12px;
}
.clip.tight .clip-head {
  font-size: 10px;
  padding-left: 1px;
}
.clip.sliver .clip-head {
  padding: 0;
  border: 0;
}
.clip-head.faded span {
  opacity: .45;
}
.clip-head svg {
  width: 9px;
  height: 10px;
  flex: none;
}
.clip-body {
  width: 100%;
  height: 29px;
}
.ticks .clip-head {
  background: repeating-linear-gradient(90deg, #474d52 0 3px, #353c41 3px 5px);
}
.playhead {
  position: absolute;
  top: 0;
  bottom: 0;
  width: 14px;
  margin-left: -13px;
  background: linear-gradient(90deg, #4f8a2800, #5a9a26 85%);
  border-right: 1px solid #a8e868;
}
.v-scroll {
  display: flex;
  flex-direction: column;
  width: 20px;
  flex: none;
  background: #363c43;
}
.v-scroll button {
  width: 19px;
  height: 20px;
  background: #484f57;
  border: 1px solid #2e353b;
  line-height: 14px;
}
.v-scroll .dot {
  color: #1f252a;
}
.v-scroll svg {
  width: 10px;
  height: 8px;
  margin: 0 auto;
  color: #272d33;
}
.v-scroll b {
  width: 19px;
  height: 33px;
  background: #535b63;
  border: 1px solid #656e75;
}
.v-scroll .last {
  margin: auto 0 0;
}
.watermark {
  position: absolute;
  right: 18px;
  bottom: 24px;
  font: bold 22px/28px "Open Sans", sans-serif;
  color: #fff;
}
```
FILE: script.js
```js
const BARS = 247.3;
const pct = n => (n / BARS * 100) + '%';
const use = name => `<svg><use href="#i-${name}"/></svg>`;

document.querySelectorAll('[data-icon]').forEach(el => {
  el.innerHTML = use(el.dataset.icon);
});

// small fixed-seed generator so the waveforms stay the same on reload
let seed = 7;
function rnd() {
  seed = (seed * 16807) % 2147483647;
  return seed / 2147483647;
}

/* ---- channel rack ---- */
const RED = '#674a4d', SLATE = '#414b55', BLUE = '#545d86', TEAL = '#5a7779';
const channels = [
  ['1', 'terry', '#56617f', 150, '#91a1c8'],
  ['2', 'BASS贝斯', RED, 165],
  ['3', '高音bass', RED, 90],
  ['4', '中音bass', RED, 90],
  ['5', '三和..过度', RED, 90],
  ['6', '八和..泡音', RED, 90],
  ['7', '..干声', '#7c5f72', 90, '', 1],
  ['8', 'mc..潮分解', SLATE, 95],
  ['9', '若隐若现', RED, 90, '#88767f'],
  ['10', 'Get Up 旋律', RED, 90],
  ['11', '尖  加花', RED, 100, '#ffffff'],
  ['12', 'YY开..配音', SLATE, 100],
  ['13', 'Vox05', '#7d7060', 45, '', 1],
  ['14', 'PD', '#4b8d80', 90],
  ['15', 'MCYY..擦声', '#4b5963', 90],
  ['16', 'FX', RED, 90],
  ['17', 'VE..oise', '#5c7462', 60, '', 1],
  ['17', 'SCRE..LR', '#5a7374', 60, '', 1],
  ['20', '202..als', '#587084', 90, '#8fb3c4', 1],
  ['---', '前奏加花', '#53564a', 60],
  ['21', '3ox', '#4bab82', 50],
  ['---', 'VFX..17', '#596a76', 240, '', 1],
  ['---', 'VED..l 08', '#7b625f', 100, '', 1],
  ['auto', 'Love..频率', BLUE, 160],
  ['---', '.. (2)', '#66735a', 60, '#a9bd9b', 1],
  ['---', 'VED..07', TEAL, 85, '', 1],
  ['---', 'VED..03', TEAL, 95, '', 1],
  ['---', 'VED..45', '#596e79', 85, '', 1],
  ['auto', 'MCY..乘数', BLUE, 0, '#8f97cc'],
  ['---', 'MC..断2', '#7c5a69', 90, '', 1]
];
const steps = Array.from({ length: 16 }, (_, i) =>
  `<input type="checkbox" aria-label="Step ${i + 1}"${i % 8 > 3 ? ' class="red"' : ''}>`).join('');
const roll = `<svg class="roll" viewBox="0 0 257 30" preserveAspectRatio="none"><path stroke="#8cc79b" stroke-width="2"
  d="M1 20h78M33 7h46M97 20h30M129 20h14M113 7h30M161 14h14M193 14h46M209 2h27"/></svg>`;

document.getElementById('channels').innerHTML = channels.map(([mix, name, tone, turn, lit, wave]) => `
  <div class="channel" style="--turn:${turn}deg;--tone:${tone};${lit ? '--lit:' + lit : ''}">
    <button class="led${mix === '12' ? ' off' : ''}" aria-label="Mute ${name}"></button>
    <i class="knob${mix === 'auto' ? ' low' : ''}"></i><i class="knob"></i>
    ${mix === 'auto' ? `<span class="mix auto">${use('auto')}</span>` : `<input class="mix" value="${mix}" aria-label="Mixer track ${name}">`}
    <button class="name">${name}${wave ? use('wave') : ''}</button>
    <i class="pick"></i>
    ${name === '3ox' ? roll : `<div class="steps">${steps}</div>`}
  </div>`).join('');

/* ---- playlist tools and picker ---- */
document.getElementById('plTools').innerHTML =
  ['pencil', 'brush', 'no', 'mute', 'slip', 'slice', 'sel', 'zoom', 'spk']
    .map(n => `<button aria-label="${n}">${use(n)}</button>`).join('');

function notes(w, h, n, len) {
  let d = '';
  for (let i = 0; i < n; i++) {
    const y = Math.round(h * (.2 + .7 * Math.sqrt(rnd())) / 3) * 3;
    d += `M${(rnd() * w).toFixed(1)} ${y}h${(len * (.4 + rnd())).toFixed(1)}`;
  }
  return d;
}
const pics = {
  1: 'M0 24h16M50 14h14M66 11h14M82 7h16M98 4h20M118 1h10',
  2: notes(80, 18, 90, 4), 3: notes(80, 24, 90, 3), 4: notes(80, 14, 36, 2),
  5: notes(80, 24, 80, 2), 6: notes(80, 24, 90, 3), 7: notes(80, 20, 24, 2), 9: 'M16 24h3M50 24h8M82 24h3M116 24h8'
};
document.getElementById('patterns').innerHTML = [1, 2, 3, 4, 5, 6, 7, 9].map(n => `
  <button class="pattern${n === 7 ? ' current' : ''}">
    <svg class="pic" viewBox="0 0 133 26"><path d="${pics[n]}" ${n > 1 && n < 9 ? 'transform="translate(50 2)"' : ''} stroke="#5d666d" stroke-width="${n === 1 ? 2 : 1}"/></svg>
    ${use('pat')}样式 ${n}
    ${n === 1 || n === 6 ? `<i class="edge" style="--edge:${n === 1 ? '#9cb0bb' : '#f3ffff'}"></i>` : ''}
  </button>`).join('');

/* ---- waveforms ---- */
const shapes = {
  full: x => .8 + .18 * Math.abs(Math.sin(x * 6.300)),
  vocal: x => .18 + .5 * Math.min(1, x * 2.200) * (.7 + .3 * Math.sin(x * 40)) * (x > .9 ? (1 - x) * 8 : 1),
  vocal2: x => (.35 + .35 * Math.abs(Math.sin(x * 11))) * (x > .86 ? (x > .97 ? .1 : .35) : 1),
  decay: x => x < .02 ? 1 : x < .45 ? .7 - x * .2 : Math.max(.03, .6 * (1 - (x - .45) / .5)),
  rise: x => .03 + .97 * Math.pow(x, 1.800),
  up: x => x < .15 ? .04 : x < .75 ? Math.pow((x - .1) / .65, 1.600) : 1 - (x - .75) * 1.800,
  down: x => x < .68 ? Math.max(.03, 1 - x * 1.500) : .03,
  hit: x => Math.max(.03, Math.pow(1 - x, 3)),
  fall: x => Math.max(.03, .55 * (1 - x)),
  swell: x => x < .45 ? .03 : x < .6 ? .7 + (x - .45) * 2 : 1,
  tail: x => x < .05 ? 1 : Math.max(.03, .95 * (1 - x * 1.250)),
  stab: x => x < .5 ? 1 : 1.500 - x,
  dense: () => .66 + (rnd() > .6 ? .3 : 0),
  slab: () => .82
};
const noise = { full: .16, vocal: .35, vocal2: .35, dense: .1, slab: .12, decay: .2, tail: .2 };

function wave(kind, len, color, ramp = '') {
  const n = Math.max(6, Math.round(len * 3)), top = [], bot = [];
  for (let i = 0; i <= n; i++) {
    const a = 13 * shapes[kind](i / n) * (1 - (noise[kind] || .03) * rnd());
    top.push(`${i},${(14 - a).toFixed(1)}`);
    bot.unshift(`${i},${(15 + a).toFixed(1)}`);
  }
  const line = ramp ? `<path d="M0 29L${n * ramp} 7" stroke="#a3acd2" stroke-width="1.500" vector-effect="non-scaling-stroke"/>` : '';
  return `<svg class="clip-body" viewBox="0 0 ${n} 29" preserveAspectRatio="none"><polygon fill="${color}" points="${top.join(' ')} ${bot.join(' ')}"/>${line}</svg>`;
}

function curve(pts, len, line, fill) {
  const d = pts.map(([x, y, c], i) => {
    const py = 2 + y * 26;
    if (c) return `Q${c[0]} ${2 + c[1] * 26} ${x} ${py}`;
    return `${i ? 'L' : 'M'}${x} ${py}`;
  }).join('');
  return `<svg class="clip-body" viewBox="0 0 ${len} 29" preserveAspectRatio="none">
    <path d="${d}V29H0z" fill="${fill}"/><path d="${d}" fill="none" stroke="${line}" stroke-width="1" vector-effect="non-scaling-stroke"/></svg>`;
}

function pattern(len, kind) {
  const w = len * 4.600;
  let d = '';
  if (kind === '4') {
    for (let x = 0; x < w; x += 4) d += `M${x} 19h3M${x} 20h3`;
    for (let x = 8; x < w; x += 9) d += `M${x} ${4 + rnd() * 6}v3M${x} 24v3`;
  } else if (kind === '2') {
    for (let x = 0; x < w; x += 6) {
      const y = 16 + 2 * Math.sin(x / 14) + rnd() * 2;
      d += `M${x} ${y}h6M${x} ${y + 2}h6M${x + 2} ${y - 5 - rnd() * 4}v3M${x + 4} ${y + 4}v4`;
    }
  } else {
    for (let x = 0; x < w; x += 5) {
      d += `M${x} 19h4M${x + rnd() * 4} ${12 + rnd() * 4}h3M${x} ${22 + rnd() * 4}h4M${x} ${16 + rnd() * 2}h3`;
      if (rnd() > .4) d += `M${x} ${3 + (x % 37) / 4}h2`;
    }
  }
  return `<svg class="clip-body" viewBox="0 0 ${w} 29" preserveAspectRatio="none"><path d="${d}" fill="none" stroke="#8b9598" stroke-width="1"/></svg>`;
}

function clip(start, len, { color = '#444b50', icon = '', text = '', faded = false, body = '', cls = '' }) {
  return `<div class="clip ${cls}" style="left:${pct(start)};width:${pct(len)}">
    <div class="clip-head${faded ? ' faded' : ''}" style="--c:${color}">${icon ? use(icon) : ''}${text ? `<span>${text}</span>` : ''}</div>${body}</div>`;
}
function sizeClass(l) {
  if (l > 20) return 'long';
  if (l > 12) return 'tight';
  return l < 1.500 ? 'sliver' : '';
}
const audio = (s, l, kind, color, tint, text = '', faded = true, ramp = '') =>
  clip(s, l, { color, icon: l > 1.500 ? 'clip' : '', text, faded, cls: sizeClass(l), body: wave(kind, l, tint, ramp) });
const pat = (s, l, n) =>
  clip(s, l, { icon: 'pat', text: l < 9 ? '样..' : '样式 ' + n, faded: l < 9, cls: l < 9 ? '' : 'long', body: pattern(l, n) });

// runs of tiny pattern clips drawn as one block
function slashes(s, e) {
  const w = (e - s) * 3;
  let d = '';
  for (let x = 1; x < w - 2; x += 4) d += `M${x} 26L${x + 1.600} 4`;
  d += `M${w - 6} 24v5M${w - 5} 24v5M${w - 4} 24v5`;
  return clip(s, e - s, { cls: 'ticks', body: `<svg class="clip-body" viewBox="0 0 ${w} 29" preserveAspectRatio="none"><path d="${d}" stroke="#7b8588" vector-effect="non-scaling-stroke"/></svg>` });
}
function dotsRun(s, e) {
  return clip(s, e - s, { cls: 'ticks', body: `<svg class="clip-body" viewBox="0 0 40 29" preserveAspectRatio="none"><path d="M0 27.500h40" stroke="#717b7e" stroke-dasharray="1 .6"/></svg>` });
}

const PINK = '#6d4e60', PINKW = '#c6adbd', ICE = '#44606f', ICEW = '#a5bccb';
const GREEN = '#4d6d5b', GREENW = '#aec6b6', ROSE = '#6b4c50', ROSEW = '#c6adb0';
const SEA = '#48635f', SEAW = '#abc5c2', OLIVE = '#6b764a', KHAKI = '#5b6752', KHAKIW = '#bac5aa';
const BROWN = '#6b524d', NAVY = '#4c5480', WINE = '#784a61';

const lanes = {};
lanes[1] = [16, 24, 119, 127, 204, 212].map(b => audio(b, 8, 'full', ICE, ICEW, '2..s')).join('')
  + audio(48.5, 48.3, 'vocal', PINK, PINKW, '睡懵的小七 - 大天蓬 (女声版)干声', false)
  + audio(100, 3, 'full', '#4c6d50', '#abc5b6')
  + audio(135, 54, 'vocal2', PINK, PINKW, '睡懵的小七 - 大天蓬 (女声版)干声', false);

lanes[2] = [[0, 15], [16, 31], [32, 48], [49, 64], [65, 80], [81, 94.5], [103, 118], [119, 135], [136, 151],
  [152, 167], [168, 183], [188, 203], [204, 219], [220, 236]].map(r => slashes(...r)).join('')
  + [15, 48, 135, 167, 203].map(b => audio(b, 1, 'slab', '#6b484e', PINKW)).join('')
  + [64, 80, 102, 151].map(b => audio(b, 1, 'slab', '#4b6360', '#abc5c9')).join('')
  + audio(95, 7, 'slab', BROWN, '#c6b0ac');

lanes[3] = pat(8, 8, '5') + pat(220, 8, '5')
  + [[57, 64], [65, 72], [73, 80], [81, 88], [89, 94.5], [103, 110], [111, 118], [119, 126], [127, 134], [136, 143],
    [144, 151], [152, 159], [160, 167], [168, 175], [176, 183], [188, 195], [196, 203]].map(r => dotsRun(...r)).join('');

lanes[4] = [[0, 15.6, '4'], [16, 16, '6'], [32, 16, '5'], [49, 46, '2'], [95, 8, '5'], [103, 16, '5'], [119, 16, '6'],
  [136, 32, '2'], [168, 16, '2'], [187, 17, '3'], [204, 16, '6'], [220, 16, '4']].map(p => pat(...p)).join('');

const LINE = '#a9b3dc', FILL = '#3b4755';
lanes[5] = clip(0, 186, {
  color: NAVY, icon: 'link2', cls: 'long', text: 'Love Philter - MCyy xuanlvDrop111 - 滤波器 1 - 截止频率',
  body: curve([[0, 0], [38, 0], [39.1, .68], [40.2, 0], [46, 0], [48, .64], [95.2, 0], [95.2, .75], [101, .08, [99, .6]], [103, .8, [102.4, .2]],
    [103, 0], [109, 0], [110.1, .7], [111.2, 0], [117, 0], [119, .73], [119, 0], [186, 0]], 186, LINE, FILL)
}) + clip(186, 28.6, {
  color: NAVY, icon: 'link2', text: 'Love Phil..1 - 截止频率',
  body: curve([[0, 0], [1, 0], [1, .9], [2, 0], [15, 0], [18, .73, [17, .2]], [28.6, 0]], 28.6, LINE, FILL)
});
lanes[6] = clip(0, 212, {
  color: WINE, icon: 'link2', cls: 'long', text: 'Free Filter - PD - 频率',
  body: curve([[0, 0], [72.2, 0], [73, .62], [81, 0], [87, 0], [89, .5], [89, 0], [93, 0], [95.2, .47], [143, 0], [144.1, .5], [152, 0, [148, .4]],
    [166, 0], [168, .55], [168, 0], [182, 0], [184, .48], [212, 0]], 212, '#d3aec3', '#444552')
});
lanes[7] = clip(0, 224.5, {
  color: NAVY, icon: 'link2', cls: 'long', text: 'Love Philter - 尖  加花 - 滤波器 1 - 截止频率',
  body: curve([[0, 0], [22, 0], [24, .75], [24, 0], [30, 0], [32, .75], [32, 0], [133, 0], [135, .65], [203.6, 0], [218, 0], [220, .68], [224.5, 0]],
    224.5, LINE, FILL)
});

lanes[8] = clip(0, 14, { color: OLIVE, icon: 'link2', text: 'Par..频率', body: curve([[0, .62], [8, .62], [8, .97], [14, .97]], 14, '#c9d49b', '#3f4a43') })
  + [14, 22, 30, 38, 46, 55, 63, 71, 79, 87, 93, 101, 109, 117, 125, 134, 142, 150, 158, 166, 174, 182, 194, 202, 210, 218]
    .map(b => clip(b, 3, { color: OLIVE, icon: 'link2', body: curve([[0, .97], [.9, .97], [1.3, .5], [2, .3], [2, .97], [3, .97]], 3, '#dde8b2', '#4b5748') })).join('')
  + clip(228, 8, { color: OLIVE, icon: 'link2', text: 'Pa..', faded: true, body: curve([[0, .62], [8, .62]], 8, '#c9d49b', '#3f4a43') });

const mc = s => clip(s, 8, { color: NAVY, icon: 'link2', text: 'MC..', faded: true, body: wave('slab', 8, KHAKIW, 1) });
lanes[9] = audio(40, 8, 'slab', KHAKI, KHAKIW, '..度') + audio(49, 8, 'tail', SEA, SEAW, 'V..') + mc(72)
  + audio(95, 4.5, 'hit', SEA, SEAW) + mc(143) + audio(159, 8, 'slab', KHAKI, KHAKIW, '..度')
  + audio(184, 4, 'hit', SEA, SEAW) + audio(188, 8, 'tail', SEA, SEAW, 'V..');

lanes[10] = [15, 135].map(b => audio(b, 1, 'rise', ROSE, PINKW)).join('')
  + [28, 180].map(b => clip(b, 4, { color: NAVY, icon: 'link2', body: wave('swell', 4, KHAKIW, .5) })).join('')
  + [91, 115, 216].map(b => audio(b, 4, 'swell', KHAKI, KHAKIW, '', true, .5)).join('')
  + audio(95, 8.3, 'fall', BROWN, '#c6b0ac', '..)');

const hits = [0, 8, 15, 16, 24, 32, 39, 39.6, 40.2, 46, 47, 47.6, 48.2, 49, 56, 56.5, 57, 64, 65, 72, 72.5, 73, 77, 78, 79, 79.5, 80, 81,
  88, 88.5, 89, 93, 93.6, 94.2, 95, 102, 103, 110, 110.5, 111, 117, 117.5, 118, 119, 125, 125.5, 126, 127, 134, 134.6, 136, 143, 143.5, 144,
  148, 149, 150, 150.5, 151, 152, 159, 159.5, 160, 165, 166, 166.5, 167, 168, 175, 175.5, 176, 182, 182.5, 183, 184, 188, 195, 195.5, 196,
  203, 204, 210, 210.5, 211, 212, 218, 218.5, 219, 220, 228, 236];
lanes[11] = hits.map(b => audio(b, .45, 'stab', '#50674f', KHAKIW)).join('');

let kicks = '';
function pair(from, to) {
  for (let b = from, red = true; b < to; b += 4, red = !red) {
    kicks += audio(b, Math.min(4, to - b), red ? 'down' : 'up', red ? ROSE : GREEN, red ? ROSEW : GREENW);
  }
}
kicks += audio(4, 4, 'up', GREEN, GREENW);
pair(8, 44);
kicks += audio(45, 4, 'up', GREEN, GREENW);
pair(49, 89);
kicks += audio(89, 2, 'down', ROSE, ROSEW) + audio(91, 4, 'up', GREEN, GREENW);
pair(95, 135);
pair(136, 184);
kicks += audio(184, 4, 'up', GREEN, GREENW);
pair(188, 232);
pair(236, 240);
lanes[12] = kicks;

lanes[13] = [8, 16, 24, 32, 40, 49, 57, 65, 73, 81, 89, 103, 111, 119, 127, 136, 144, 152, 160, 168, 176, 188, 196, 204, 212, 220]
  .map(b => audio(b, 8, 'decay', ROSE, ROSEW, 'Z..5')).join('') + audio(184, 4, 'down', ROSE, ROSEW);
lanes[14] = [8, 16, 24, 32, 41, 49, 57, 65, 73, 81, 103, 111, 119, 127, 136, 144, 152, 160, 168, 176, 188, 196, 204, 212, 220]
  .map(b => audio(b, 8, 'rise', GREEN, GREENW, 'V..2')).join('') + audio(89, 6, 'rise', GREEN, GREENW);
lanes[15] = [[16, 16], [49, 16], [65, 16], [81, 14], [103, 16], [119, 17], [136, 16], [152, 16], [172, 16], [188, 16], [204, 16]]
  .map(([s, l]) => audio(s, l, 'dense', '#6a4e68', '#c6adc4', l === 14 ? 'VUF2..Bars' : l === 17 ? 'VUF2 1..6Bars' : 'VUF2 1..Bars', false)).join('')
  + clip(32, 17, { color: NAVY, icon: 'link2', text: 'VUF..量乘数', body: wave('dense', 17, '#c6adc4', .9) });

/* ---- tracks ---- */
const strips = { 4: '#f3ffff' };
[1, 2, 7, 8, 10, 11, 12, 13, 14, 15].forEach(n => strips[n] = '#9bafba');
const subs = [8, 9, 10, 11, 14, 15, 16, 17];
let html = '';
for (let n = 1; n <= 21; n++) {
  html += `<div class="track${subs.includes(n) ? ' sub' : ''}${n > 15 ? ' empty' : ''}">
    <div class="track-head">Track ${n}${n === 7 || n === 13 ? '<i class="fold"></i>' : ''}<button class="led" aria-label="Mute track ${n}"></button></div>
    <i class="strip"${strips[n] ? ` style="--strip:${strips[n]}"` : ''}></i>
    <div class="lane"><i class="playhead" style="left:${pct(218.9)}"></i>${lanes[n] || ''}</div>
  </div>`;
}
document.getElementById('tracks').insertAdjacentHTML('beforeend', html);

const grid = document.getElementById('gridLines');
grid.setAttribute('viewBox', `0 0 ${BARS} 100`);
let g = `<rect width="${BARS}" height="100" fill="#2d3d48"/>`;
for (let b = 0; b < BARS; b += 32) g += `<rect x="${b}" width="16" height="100" fill="#30434f"/>`;
for (let b = 4; b < BARS; b += 4) {
  g += `<path d="M${b} 0V100" stroke="${b % 8 ? '#1d2d38' : '#172631'}" vector-effect="non-scaling-stroke"/>`;
}
grid.innerHTML = g;

let ruler = '';
for (let b = 1; b < BARS; b += 8) ruler += `<span style="width:${pct(8)}">${b}</span>`;
document.getElementById('ruler').innerHTML = ruler + `<i class="marker" style="left:${pct(218.9)}"></i>`;

/* ---- overview strip and scope ---- */
let m = '';
const rows = [['#7d8f9c', 2], ['#78838a', 4], ['#7b7194', 7], ['#7b7194', 8], ['#8f9c6b', 11], ['#6d9183', 13], ['#8b7379', 15], ['#7d7184', 18]];
rows.forEach(([c, y], i) => {
  if (i === 2 || i === 3) {
    m += `<path d="M0 ${y}h${i === 2 ? 770 : 810}" stroke="${c}" stroke-width="1.500"/>`;
    return;
  }
  for (let x = i * 9; x < 860; x += 22 + rnd() * 40) m += `<path d="M${x} ${y}h${14 + rnd() * 36}" stroke="${c}"/>`;
});
document.getElementById('miniMap').innerHTML = m + '<path d="M885 0v20" stroke="#a8e44c" stroke-width="2"/>';

let s = '';
for (let x = 1; x < 86; x++) {
  const y = 17 - 7 * Math.sin((x - 58) / 17) * (x < 30 ? -.3 : 1) * (x > 58 ? 1 : .6) + rnd() * 3;
  s += `M${x} ${y - 2 - rnd() * 4}v${5 + rnd() * 4}`;
}
document.getElementById('scope').innerHTML = `<path d="${s}" stroke="#d3dadc" stroke-width="1.200"/>`;
```
